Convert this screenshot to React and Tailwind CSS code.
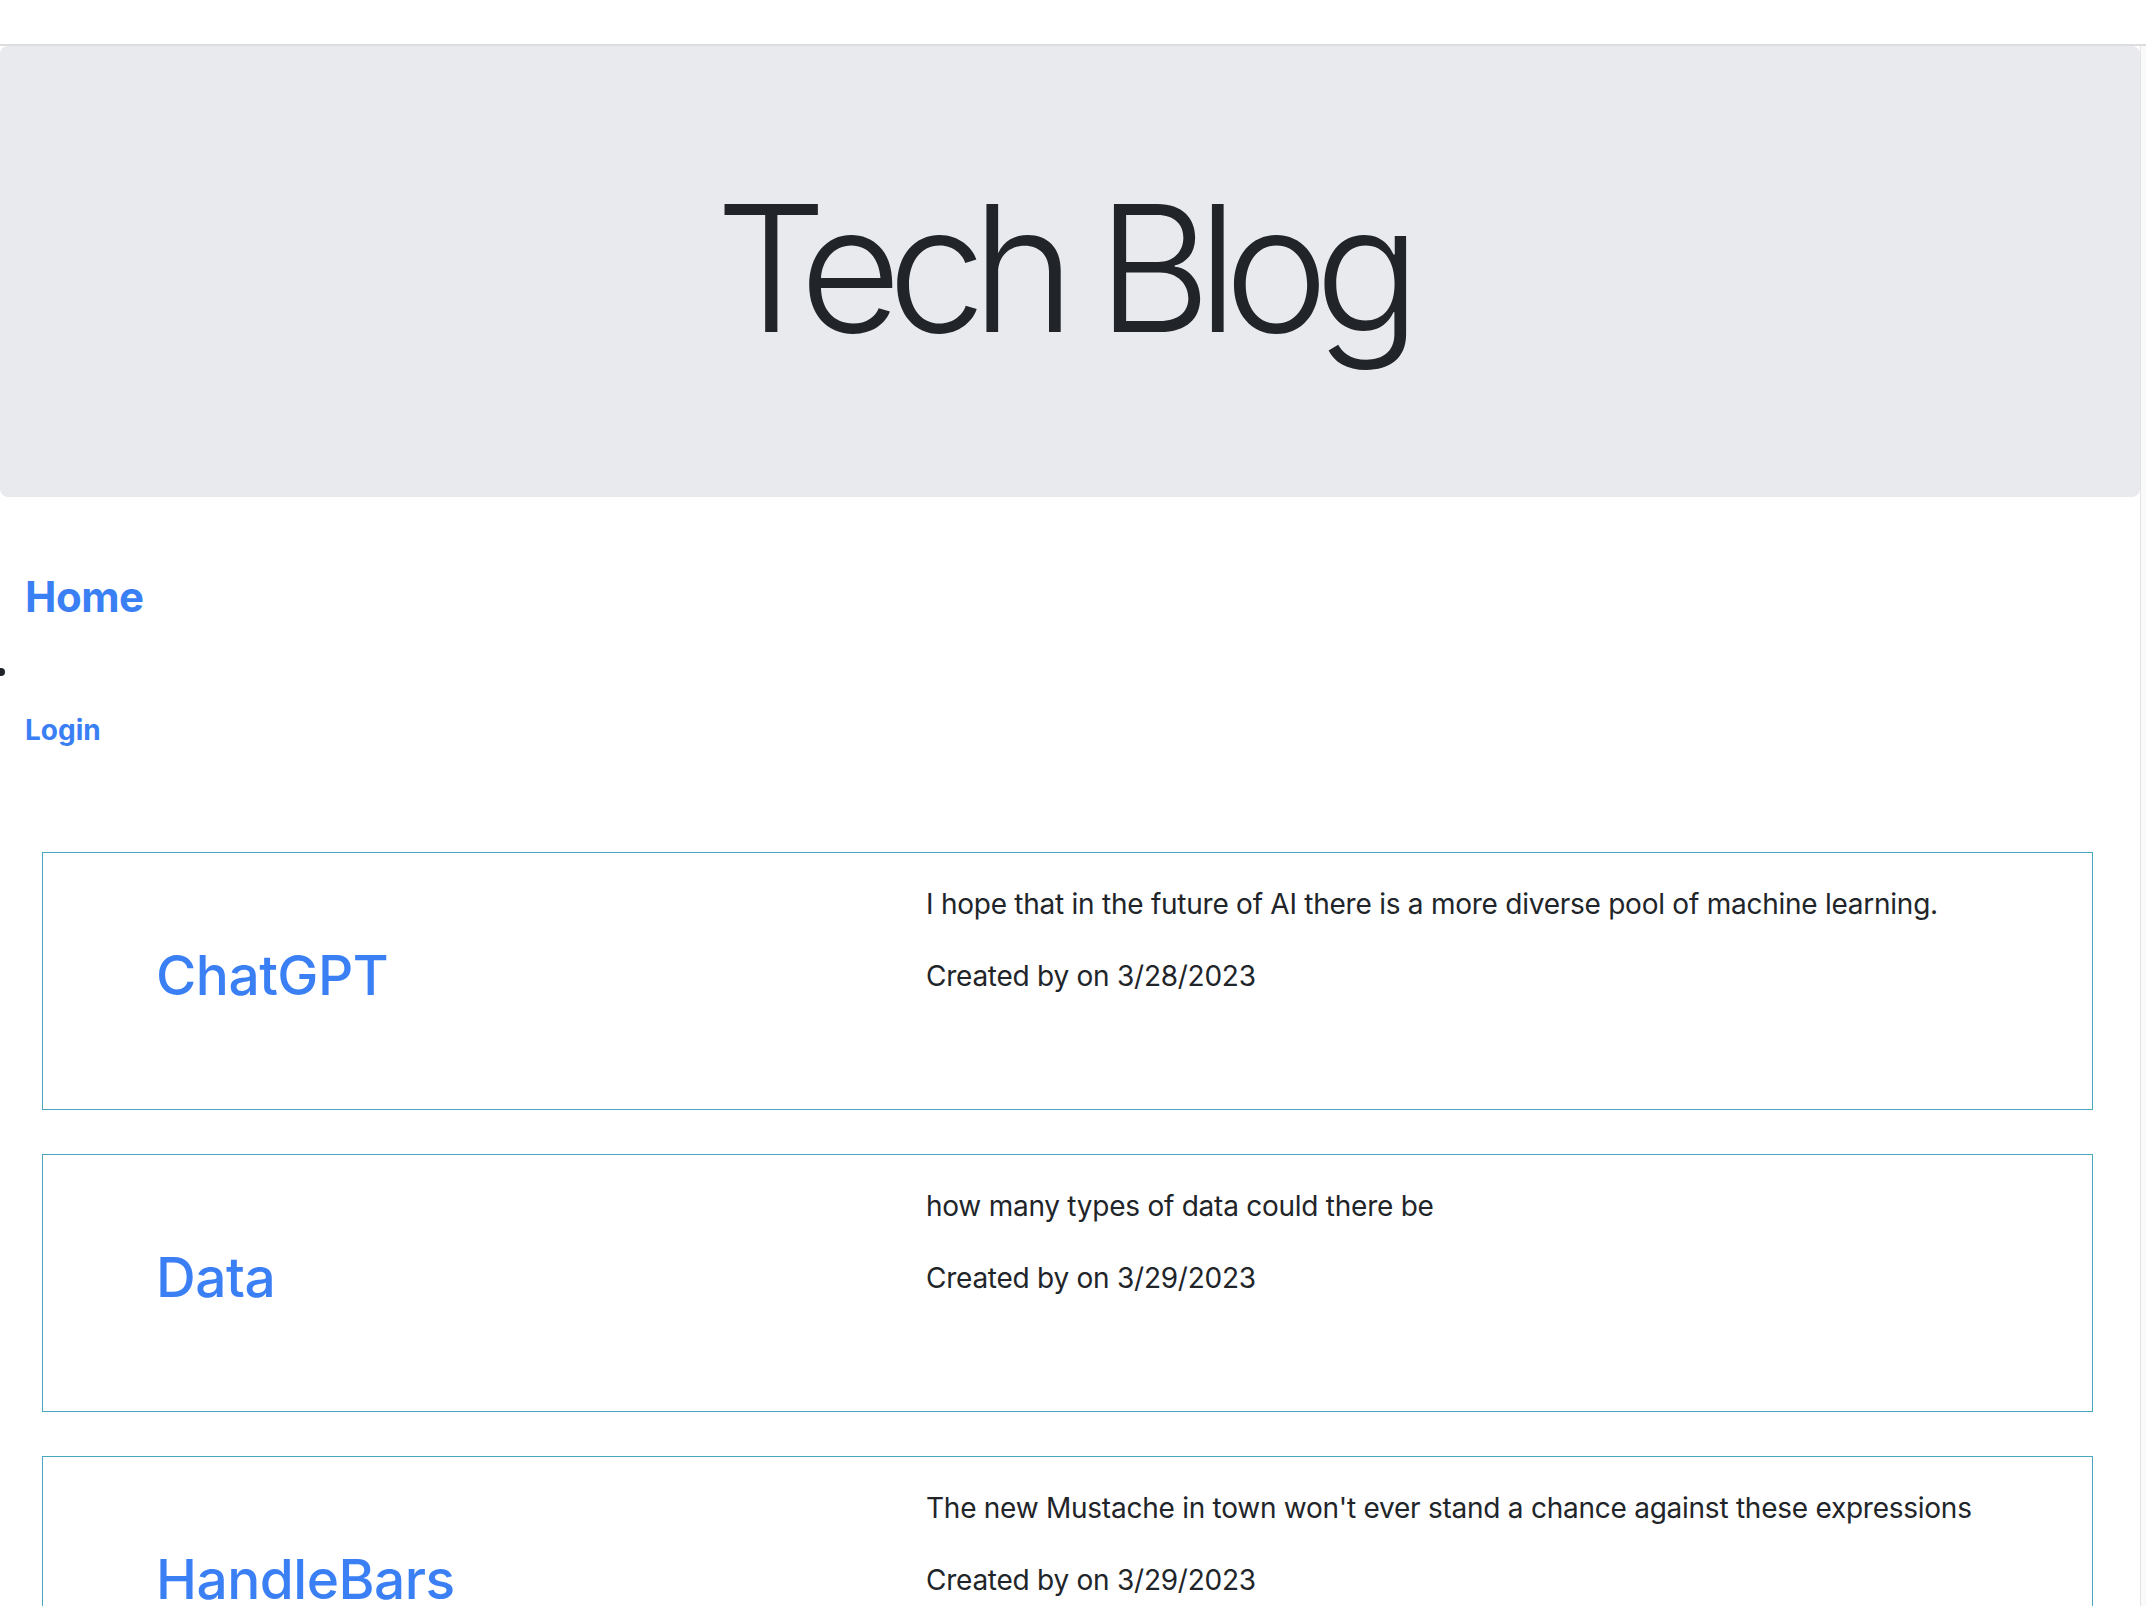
import React from "react";

const posts = [
  {
    title: "ChatGPT",
    body: "I hope that in the future of AI there is a more diverse pool of machine learning.",
    date: "3/28/2023",
  },
  {
    title: "Data",
    body: "how many types of data could there be",
    date: "3/29/2023",
  },
  {
    title: "HandleBars",
    body: "The new Mustache in town won't ever stand a chance against these expressions",
    date: "3/29/2023",
  },
];

function PostCard({ post }) {
  return (
    <div className="flex h-[258px] border border-[#4aa6bf] bg-white">
      <div className="flex w-[883px] shrink-0 items-center pb-[11px] pl-[113px]">
        <a href="#" className="text-[55px] font-medium leading-[1.2] tracking-[-0.5px] text-[#3b7ff5]">
          {post.title}
        </a>
      </div>
      <div className="flex-1 pt-[30px] text-[28px] leading-[42px] tracking-[-0.25px] text-[#212529]">
        <p className="mb-[30px]">{post.body}</p>
        <p>Created by on {post.date}</p>
      </div>
    </div>
  );
}

export default function App() {
  return (
    <div className="h-[1606px] overflow-hidden bg-white font-['Inter','Noto_Sans',sans-serif] text-[#212529]">
      <div className="h-[44px] bg-white" />
      <div className="h-[2px] bg-[#dcdddf]" />
      <div className="flex h-full">
        <div className="w-[2140px] shrink-0">
          <header className="flex h-[451px] items-center justify-center rounded-[8px] bg-[#e9eaee] pb-[8px] pr-[18px]">
            <h1 className="text-[176px] font-light leading-none tracking-[-14px] text-[#212529]">
              Tech Blog
            </h1>
          </header>

          <nav className="pt-[75px]">
            <a href="#" className="block pl-[25px] text-[42px] font-bold leading-[1.2] tracking-[-0.5px] text-[#3b7ff5]">
              Home
            </a>
            <div className="mt-[46px] -ml-[3px] h-[8px] w-[8px] rounded-full bg-[#212529]" />
            <a href="#" className="mt-[38px] block pl-[25px] text-[28px] font-bold leading-[1.2] text-[#3b7ff5]">
              Login
            </a>
          </nav>

          <main className="mt-[104px] flex flex-col gap-[44px] pl-[42px] pr-[47px]">
            {posts.map((p) => (
              <PostCard key={p.title} post={p} />
            ))}
          </main>
        </div>
        <div className="flex-1 border-l border-[#e3e3e3] bg-[#fafafa]" />
      </div>
    </div>
  );
}
